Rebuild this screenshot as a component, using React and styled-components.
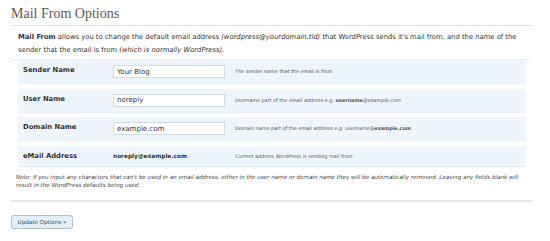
import React from "react";
import styled, { createGlobalStyle } from "styled-components";

const Global = createGlobalStyle`
  html, body { margin: 0; padding: 0; background: #fff; }
  body { font-family: "DejaVu Sans", "Noto Sans", sans-serif; color: #333; }
`;

const Wrap = styled.div`
  padding: 0 18px 0 11px;
`;

const Title = styled.h2`
  margin: 0;
  padding: 6px 0 4px 0;
  font-family: "Liberation Serif", "DejaVu Serif", serif;
  font-weight: normal;
  font-size: 14px;
  line-height: 15px;
  color: #5b5b5b;
  border-bottom: 1px solid #e2e2e2;
`;

const Intro = styled.p`
  margin: 0;
  padding: 5px 0 3px 7px;
  font-size: 6.8px;
  line-height: 12.5px;
  color: #333;
  border-bottom: 1px solid #ececec;
  i { font-style: italic; }
  b { font-weight: bold; }
`;

const Table = styled.div`
  margin: 0 6px 0 7px;
  display: flex;
  flex-direction: column;
  gap: 4.5px;
`;

const Row = styled.div`
  display: grid;
  grid-template-columns: 90px 122px 1fr;
  align-items: ${(p) => (p.$static ? "center" : "start")};
  padding: ${(p) => (p.$static ? "6px 5px 5px 5px" : "5px 5px 5px 5px")};
  background: #eef5fc;
  border-bottom: 1px solid #e7eff7;
`;

const Label = styled.div`
  font-weight: bold;
  font-size: 6.8px;
  line-height: 9px;
  color: #333;
  padding-top: ${(p) => (p.$static ? "0" : "1px")};
`;

const Input = styled.input`
  box-sizing: border-box;
  width: 112px;
  height: 13px;
  margin: 0;
  padding: 0 3px;
  border: 1px solid #cfdde9;
  background: #fff;
  font-family: "DejaVu Sans", sans-serif;
  font-size: 7px;
  color: #333;
  outline: none;
`;

const Value = styled.div`
  font-weight: bold;
  font-size: 5.8px;
  line-height: 9px;
  color: #333;
`;

const Desc = styled.div`
  font-size: 4.9px;
  line-height: ${(p) => (p.$static ? "9px" : "13px")};
  color: #555;
  b { font-weight: bold; }
`;

const Note = styled.p`
  margin: 0;
  padding: 6px 0 0 5px;
  font-size: 5.6px;
  line-height: 8.5px;
  font-style: italic;
  color: #444;
  height: 27px;
`;

const Submit = styled.div`
  display: flex;
  border-top: 2px solid #e6e6e6;
  padding-top: 13px;
`;

const Button = styled.button`
  box-sizing: border-box;
  height: 14px;
  width: 62px;
  padding: 0 3px;
  border: 1px solid #a9c2d6;
  border-radius: 3px;
  background: #e6eff6;
  font-family: "DejaVu Sans", sans-serif;
  font-size: 5.6px;
  color: #2a4f73;
  white-space: nowrap;
`;

const fields = [
  { label: "Sender Name", value: "Your Blog", desc: "The sender name that the email is from" },
  {
    label: "User Name",
    value: "noreply",
    desc: (
      <>
        Username part of the email address e.g. <b>username</b>@example.com
      </>
    ),
  },
  {
    label: "Domain Name",
    value: "example.com",
    desc: (
      <>
        Domain name part of the email address e.g. username@<b>example.com</b>
      </>
    ),
  },
];

export default function App() {
  return (
    <>
      <Global />
      <Wrap>
        <Title>Mail From Options</Title>
        <Intro>
          <b>Mail From</b> allows you to change the default email address{" "}
          <i>(wordpress@yourdomain.tld)</i> that WordPress sends it's mail from, and the name of the
          sender that the email is from <i>(which is normally WordPress).</i>
        </Intro>
        <Table>
          {fields.map((f) => (
            <Row key={f.label}>
              <Label>{f.label}</Label>
              <Input defaultValue={f.value} />
              <Desc>{f.desc}</Desc>
            </Row>
          ))}
          <Row $static>
            <Label $static>eMail Address</Label>
            <Value>noreply@example.com</Value>
            <Desc $static>Current address WordPress is sending mail from</Desc>
          </Row>
        </Table>
        <Note>
          Note: If you input any characters that can't be used in an email address, either in the
          user name or domain name they will be automatically removed. Leaving any fields blank will
          result in the WordPress defaults being used.
        </Note>
        <Submit>
          <Button>Update Options »</Button>
        </Submit>
      </Wrap>
    </>
  );
}
